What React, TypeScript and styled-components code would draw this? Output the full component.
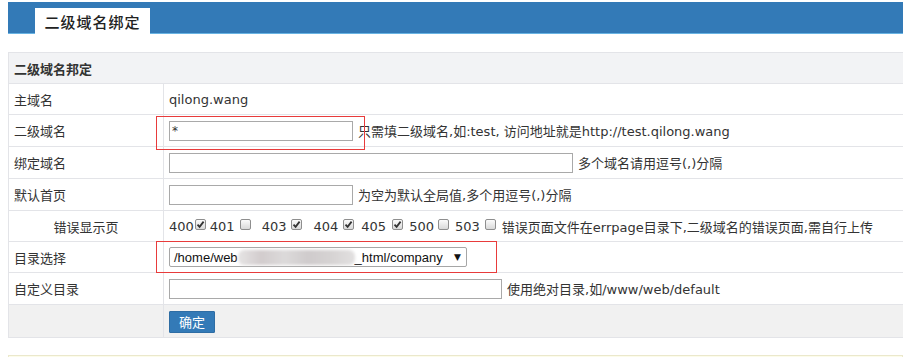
import React from 'react'
import styled, { createGlobalStyle } from 'styled-components'

const GlobalStyle = createGlobalStyle`
  html, body {
    margin: 0;
    padding: 0;
    background: #fff;
    overflow: hidden;
  }
  body {
    font-family: "DejaVu Sans", "Noto Sans CJK SC", sans-serif;
    font-size: 13px;
    color: #333;
  }
`

const codes = [
  { code: '400', checked: true, before: 0, gap: 1 },
  { code: '401', checked: false, before: 4, gap: 5 },
  { code: '403', checked: true, before: 11, gap: 5 },
  { code: '404', checked: true, before: 11, gap: 5 },
  { code: '405', checked: true, before: 7, gap: 6 },
  { code: '500', checked: false, before: 6, gap: 4 },
  { code: '503', checked: false, before: 6, gap: 5 },
]

function App() {
  return (
    <Page>
      <GlobalStyle />
      <TopBar>
        <Tab>二级域名绑定</Tab>
      </TopBar>

      <Table>
        <HeadRow>二级域名邦定</HeadRow>

        <Row $h={30}>
          <Label>主域名</Label>
          <Value>qilong.wang</Value>
        </Row>

        <Row $h={31}>
          <Label>二级域名</Label>
          <Value>
            <TextInput $w={184} defaultValue="*" readOnly />
            <Hint>只需填二级域名,如:test, 访问地址就是http://test.qilong.wang</Hint>
            <Mark $w={209} $h={34} $top={1} />
          </Value>
        </Row>

        <Row $h={31}>
          <Label>绑定域名</Label>
          <Value>
            <TextInput $w={404} readOnly />
            <Hint>多个域名请用逗号(,)分隔</Hint>
          </Value>
        </Row>

        <Row $h={31}>
          <Label>默认首页</Label>
          <Value>
            <TextInput $w={184} readOnly />
            <Hint>为空为默认全局值,多个用逗号(,)分隔</Hint>
          </Value>
        </Row>

        <Row $h={30}>
          <Label $center>错误显示页</Label>
          <Value>
            {codes.map((c) => (
              <CodeItem key={c.code} $before={c.before}>
                {c.code}
                <Check $gap={c.gap}>
                  {c.checked && (
                    <svg width="9" height="9" viewBox="0 0 9 9">
                      <path d="M1.5 4.6 L3.6 6.8 L7.6 1.6" fill="none" stroke="#333" strokeWidth="1.8" />
                    </svg>
                  )}
                </Check>
              </CodeItem>
            ))}
            <Hint $left={6}>错误页面文件在errpage目录下,二级域名的错误页面,需自行上传</Hint>
          </Value>
        </Row>

        <Row $h={30}>
          <Label>目录选择</Label>
          <Value>
            <SelectBox>
              /home/web<Blur />_html/company
              <Arrow>▼</Arrow>
            </SelectBox>
            <Mark $w={341} $h={32} $top={-1} />
          </Value>
        </Row>

        <Row $h={31}>
          <Label>自定义目录</Label>
          <Value>
            <TextInput $w={333} readOnly />
            <Hint>使用绝对目录,如/www/web/default</Hint>
          </Value>
        </Row>

        <Row $h={32} $bg="#f1f1f1">
          <Label />
          <Value>
            <Button>确定</Button>
          </Value>
        </Row>
      </Table>

      <Notice />
    </Page>
  )
}

export default App

const Page = styled.div`
  padding: 2px 0 0 8px;
`

const TopBar = styled.div`
  height: 31px;
  background: #337ab7;
  border-bottom: 1px solid #68b3e3;
  display: flex;
  align-items: flex-end;
`

const Tab = styled.div`
  margin: 0 0 -1px 27px;
  width: 115px;
  height: 26px;
  background: #fff;
  display: flex;
  align-items: center;
  justify-content: center;
  font-size: 15px;
  font-weight: 500;
  letter-spacing: 1px;
  color: #222;
`

const Table = styled.div`
  margin-top: 18px;
  width: calc(100% + 20px);
  border-top: 1px solid #e3e4e8;
  border-left: 1px solid #e3e4e8;
`

const HeadRow = styled.div`
  height: 30px;
  display: flex;
  align-items: center;
  padding-left: 5px;
  background: #f2f3f5;
  border-bottom: 1px solid #e3e4e8;
  font-weight: bold;
  color: #333;
`

const Row = styled.div<{ $h: number; $bg?: string }>`
  display: grid;
  grid-template-columns: 155px 1fr;
  height: ${(p) => p.$h}px;
  background: ${(p) => p.$bg || '#fff'};
  border-bottom: 1px solid #e3e4e8;
`

const Label = styled.div<{ $center?: boolean }>`
  box-sizing: border-box;
  display: flex;
  align-items: center;
  justify-content: ${(p) => (p.$center ? 'center' : 'flex-start')};
  padding-left: ${(p) => (p.$center ? '0' : '5px')};
  border-right: 1px solid #e3e4e8;
  color: #333;
`

const Value = styled.div`
  position: relative;
  display: flex;
  align-items: center;
  padding-left: 5px;
  white-space: nowrap;
`

const TextInput = styled.input<{ $w: number }>`
  box-sizing: border-box;
  width: ${(p) => p.$w}px;
  height: 20px;
  margin: 0;
  padding: 0 2px;
  border: 1px solid #a9a9a9;
  border-radius: 0;
  outline: none;
  font-family: "DejaVu Sans", sans-serif;
  font-size: 12px;
  color: #333;
`

const Hint = styled.span<{ $left?: number }>`
  margin-left: ${(p) => p.$left ?? 5}px;
  color: #333;
`

const CodeItem = styled.span<{ $before: number }>`
  display: inline-flex;
  align-items: center;
  margin-left: ${(p) => p.$before}px;
  color: #333;
`

const Check = styled.span<{ $gap: number }>`
  box-sizing: border-box;
  display: inline-flex;
  align-items: center;
  justify-content: center;
  width: 11px;
  height: 11px;
  margin-left: ${(p) => p.$gap}px;
  margin-top: -3px;
  border: 1px solid #8e8e8e;
  border-radius: 2px;
  background: linear-gradient(#fbfbfb, #d9d9d9);
`

const SelectBox = styled.div`
  box-sizing: border-box;
  width: 298px;
  height: 20px;
  display: flex;
  align-items: center;
  padding-left: 4px;
  border: 1px solid #a6a6a6;
  border-radius: 2px;
  background: #fff;
  font-family: "Liberation Sans", Arial, sans-serif;
  font-size: 13px;
  color: #111;
`

const Blur = styled.span`
  display: inline-block;
  width: 117px;
  height: 15px;
  background: linear-gradient(90deg, #e6e4e4, #d2cccd 20%, #dcdada 40%, #cfcbcc 60%, #d6d3d3 80%, #e2e0e0);
  filter: blur(1.5px);
  border-radius: 6px;
`

const Arrow = styled.span`
  margin-left: auto;
  margin-right: 5px;
  font-family: "DejaVu Sans", sans-serif;
  font-size: 9px;
  color: #111;
`

const Button = styled.button`
  width: 46px;
  height: 22px;
  padding: 0;
  margin-top: 1px;
  border: 1px solid #2e6da4;
  border-radius: 1px;
  background: #337ab7;
  color: #fff;
  font-family: "DejaVu Sans", "Noto Sans CJK SC", sans-serif;
  font-size: 13px;
`

const Mark = styled.div<{ $w: number; $h: number; $top: number }>`
  position: absolute;
  left: -8px;
  top: ${(p) => p.$top}px;
  box-sizing: border-box;
  width: ${(p) => p.$w}px;
  height: ${(p) => p.$h}px;
  border: 1px solid #e83b3b;
  pointer-events: none;
`

const Notice = styled.div`
  margin-top: 17px;
  height: 20px;
  border: 1px solid #ebe8cc;
  background: #fcfcea;
`
